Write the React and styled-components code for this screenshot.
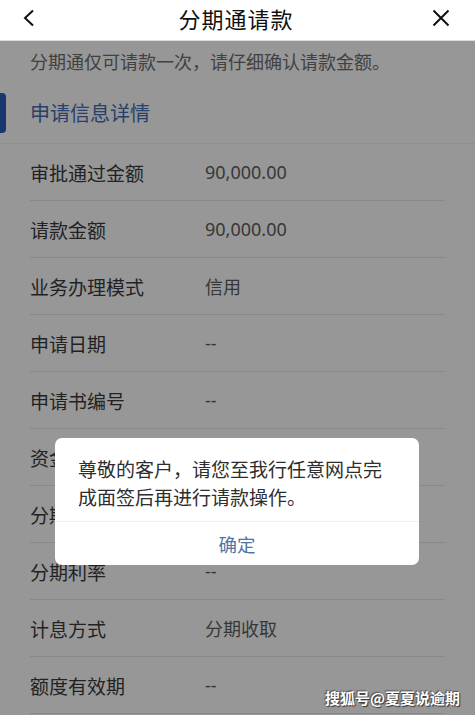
import React from "react";
import styled, { createGlobalStyle } from "styled-components";

const rows = [
  { label: "审批通过金额", value: "90,000.00" },
  { label: "请款金额", value: "90,000.00" },
  { label: "业务办理模式", value: "信用" },
  { label: "申请日期", value: "--" },
  { label: "申请书编号", value: "--" },
  { label: "资金用途", value: "--" },
  { label: "分期期数", value: "--" },
  { label: "分期利率", value: "--" },
  { label: "计息方式", value: "分期收取" },
  { label: "额度有效期", value: "--" },
];

export default function App() {
  return (
    <Page>
      <GlobalStyle />
      <Header>
        <IconButton>
          <svg width="14" height="18" viewBox="0 0 14 18">
            <path d="M11 1.5 L3 9 L11 16.5" fill="none" stroke="#111" strokeWidth="2" />
          </svg>
        </IconButton>
        <Title>分期通请款</Title>
        <IconButton $right>
          <svg width="18" height="18" viewBox="0 0 18 18">
            <path d="M1.5 1.5 L16.5 16.5 M16.5 1.5 L1.5 16.5" fill="none" stroke="#111" strokeWidth="2" />
          </svg>
        </IconButton>
      </Header>
      <Body>
        <Notice>分期通仅可请款一次，请仔细确认请款金额。</Notice>
        <Section>申请信息详情</Section>
        <List>
          {rows.map((r) => (
            <Row key={r.label}>
              <Label>{r.label}</Label>
              <Value>{r.value}</Value>
            </Row>
          ))}
        </List>
        <Mask />
        <Dialog>
          <DialogText>尊敬的客户，请您至我行任意网点完成面签后再进行请款操作。</DialogText>
          <DialogButton>确定</DialogButton>
        </Dialog>
        <Watermark>搜狐号@夏夏说逾期</Watermark>
      </Body>
    </Page>
  );
}

const GlobalStyle = createGlobalStyle`
  html, body {
    margin: 0;
    padding: 0;
    background: #fff;
    font-family: "Noto Sans CJK SC", "Noto Sans", sans-serif;
  }
`;

const Page = styled.div`
  width: 475px;
  height: 715px;
  overflow: hidden;
  display: flex;
  flex-direction: column;
`;

const Header = styled.div`
  height: 41px;
  background: #fff;
  display: flex;
  align-items: center;
  justify-content: space-between;
  padding: 0 22px 4px 22px;
  box-sizing: border-box;
  border-bottom: 1px solid #ddd;
`;

const IconButton = styled.div`
  width: 30px;
  display: flex;
  align-items: center;
  justify-content: ${(p) => (p.$right ? "flex-end" : "flex-start")};
  padding-right: ${(p) => (p.$right ? "3px" : "0")};
`;

const Title = styled.div`
  font-size: 22px;
  color: #111;
  letter-spacing: 1px;
`;

const Body = styled.div`
  position: relative;
  flex: 1;
  background: #f4f4f4;
`;

const Notice = styled.div`
  font-size: 18px;
  color: #6a6a6a;
  padding: 7px 30px 0;
  height: 41px;
  box-sizing: border-box;
`;

const Section = styled.div`
  position: relative;
  height: 62px;
  display: flex;
  align-items: center;
  padding: 0 30px;
  font-size: 20px;
  color: #3f69ad;
  border-bottom: 1px solid #e6e6e6;
  box-sizing: border-box;
  &::before {
    content: "";
    position: absolute;
    left: 0;
    top: 11px;
    width: 6px;
    height: 40px;
    border-radius: 0 4px 4px 0;
    background: #2a58b4;
  }
`;

const List = styled.div`
  padding: 0 30px;
`;

const Row = styled.div`
  display: flex;
  align-items: center;
  height: 57px;
  border-bottom: 1px solid #dcdcdc;
  box-sizing: border-box;
`;

const Label = styled.div`
  width: 175px;
  font-size: 19px;
  color: #383838;
`;

const Value = styled.div`
  font-size: 18px;
  color: #5a5a5a;
  font-family: "Noto Sans", "Noto Sans CJK SC", sans-serif;
`;

const Mask = styled.div`
  position: absolute;
  inset: 0;
  background: rgba(0, 0, 0, 0.38);
`;

const Dialog = styled.div`
  position: absolute;
  left: 55px;
  top: 397px;
  width: 364px;
  background: #fff;
  border-radius: 7px;
  overflow: hidden;
`;

const DialogText = styled.div`
  padding: 17px 23px 10px;
  font-size: 19px;
  line-height: 28px;
  color: #2e2e2e;
`;

const DialogButton = styled.div`
  height: 43px;
  border-top: 1px solid #f0f0f0;
  display: flex;
  align-items: center;
  justify-content: center;
  font-size: 18.5px;
  color: #4f74a6;
`;

const Watermark = styled.div`
  position: absolute;
  right: 15px;
  bottom: 7px;
  font-size: 15px;
  font-weight: bold;
  color: #fff;
  text-shadow: 1px 1px 1px #333, -1px -1px 1px #555;
`;
